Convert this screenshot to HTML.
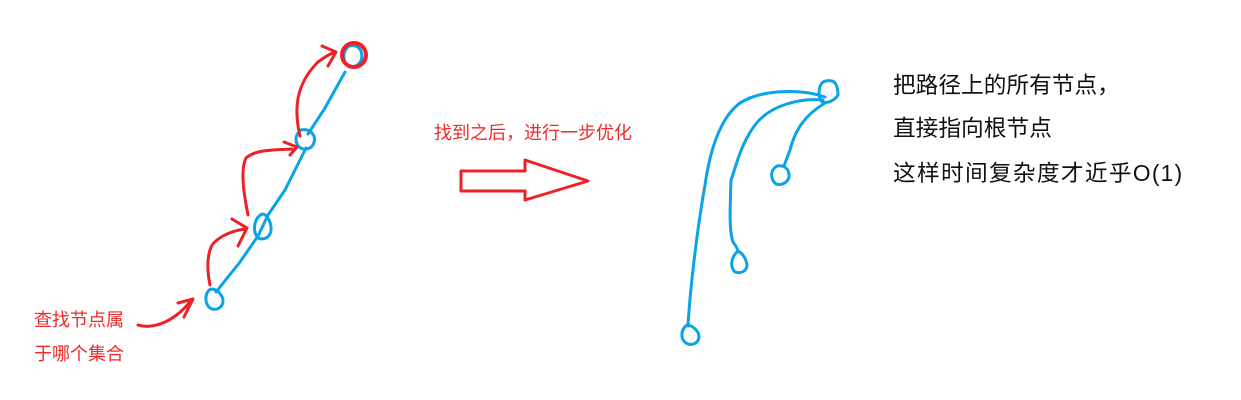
<!DOCTYPE html>
<html><head><meta charset="utf-8"><style>
body{margin:0;width:1241px;height:400px;background:#fff;position:relative;overflow:hidden}
.t{position:absolute;font-family:"Liberation Sans","Noto Sans CJK SC",sans-serif;white-space:nowrap}
.r{color:#ee2a2a}
.k{color:#111;font-size:22.7px}
</style></head><body>
<svg width="1241" height="400" style="position:absolute;left:0;top:0" fill="none" stroke-linecap="round" stroke-linejoin="round">
<g stroke="#0aa3e6" stroke-width="3">
<path d="M216,292 L240,262 L258,236 L268,215 L285,190 L300,160 L306,148 M308,134 L325,108 L345,72"/>
<path d="M211,289 C204,292 204,306 212,309 C221,311 226,302 221,295 C218,290 214,289 211,289Z"/>
<path d="M262,214 C254,218 252,231 258,238 C265,241 272,236 271,227 C270,219 266,214 262,214Z"/>
<path d="M301,130 C294,135 294,146 303,149 C311,150 316,144 314,136 C311,130 306,129 301,130Z"/>
<path d="M349,46 C342,51 342,63 350,67 C359,67 364,60 361,51 C358,45 353,45 349,46Z"/>
<path d="M825,97 C800,88 760,90 740,103 C720,118 710,150 705,185 C697,230 690,290 688,326"/>
<path d="M687,325 C680,330 680,341 688,344 C697,346 702,338 697,331 C694,327 690,325 687,325Z"/>
<path d="M823,100 C800,98 770,105 755,125 C740,145 735,170 731,180 C730,210 729,230 733,242 C736,246 738,250 738,252"/>
<path d="M738,251 C732,256 729,266 735,272 C741,274 747,271 747,265 C746,258 742,253 738,251Z"/>
<path d="M825,103 C805,115 795,130 790,150 C787,158 785,163 784,166"/>
<path d="M777,166 C770,170 770,179 776,184 C783,186 790,181 789,174 C788,167 782,165 777,166Z"/>
<path d="M822,83 C818,88 818,97 822,102 C828,104 835,100 838,95 C838,88 836,82 832,81 C828,80 824,81 822,83Z"/>
</g>
<g stroke="#ee2028" stroke-width="3">
<circle cx="354" cy="55" r="12" stroke-width="4"/>
<path d="M138,325 C155,330 175,320 190,302 M178,303 L193,299 L184,317"/>
<path d="M210,285 C207,270 207,255 212,245 C220,235 235,230 246,229 M232,219 L247,228 L238,246"/>
<path d="M248,215 C244,195 240,170 246,158 C255,150 270,150 292,149 M284,142 L297,147 L290,155"/>
<path d="M300,136 C294,110 295,85 318,62 C326,56 332,53 336,52 M322,46 L336,52 L328,66"/>
<path d="M461,171 L525,171 L525,160 L588,181 L525,200 L525,191 L461,191 Z"/>
</g>
</svg>
<div class="t r" style="left:434px;top:119px;font-size:18px">找到之后，进行一步优化</div>
<div class="t r" style="left:34px;top:306px;font-size:18px">查找节点属</div>
<div class="t r" style="left:34px;top:340px;font-size:18px">于哪个集合</div>
<div class="t k" style="left:893px;top:67px">把路径上的所有节点，</div>
<div class="t k" style="left:893px;top:110px">直接指向根节点</div>
<div class="t k" style="left:893px;top:155px;letter-spacing:1.3px">这样时间复杂度才近乎O(1)</div>
</body></html>
